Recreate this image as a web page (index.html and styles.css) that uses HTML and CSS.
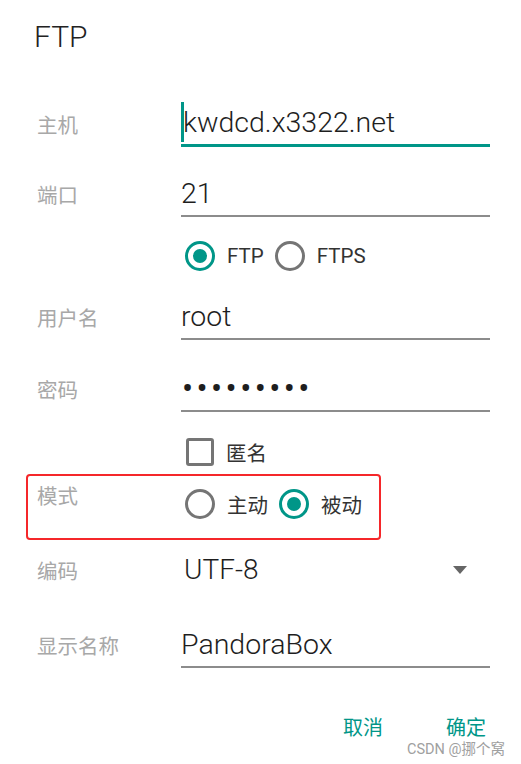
FILE: index.html
```html
<!DOCTYPE html>
<html lang="zh-CN">
<head>
<meta charset="utf-8">
<title>FTP</title>
<link rel="stylesheet" href="styles.css">
</head>
<body>
<div class="dialog">
  <div class="title">FTP</div>

  <div class="row row-host">
    <div class="label">主机</div>
    <div class="field field-focus"><span class="cursor"></span>kwdcd.x3322.net</div>
  </div>

  <div class="row row-port">
    <div class="label">端口</div>
    <div class="field">21</div>
  </div>

  <div class="row row-proto">
    <div class="label"></div>
    <div class="choices">
      <span class="radio on"></span><span class="choice-text">FTP</span>
      <span class="radio"></span><span class="choice-text">FTPS</span>
    </div>
  </div>

  <div class="row row-user">
    <div class="label">用户名</div>
    <div class="field">root</div>
  </div>

  <div class="row row-pass">
    <div class="label">密码</div>
    <div class="field pass">•••••••••</div>
  </div>

  <div class="row row-anon">
    <div class="label"></div>
    <div class="choices">
      <span class="checkbox"></span><span class="choice-text cjk">匿名</span>
    </div>
  </div>

  <div class="row row-mode">
    <div class="label label-top">模式</div>
    <div class="choices choices-mode">
      <span class="radio"></span><span class="choice-text cjk">主动</span>
      <span class="radio on"></span><span class="choice-text cjk">被动</span>
    </div>
  </div>

  <div class="row row-enc">
    <div class="label">编码</div>
    <div class="field spinner"><span class="spinner-text">UTF-8</span><span class="arrow"></span></div>
  </div>

  <div class="row row-name">
    <div class="label">显示名称</div>
    <div class="field">PandoraBox</div>
  </div>

  <div class="buttons">
    <span class="btn">取消</span>
    <span class="btn">确定</span>
  </div>

  <div class="watermark">CSDN @挪个窝</div>
</div>
</body>
</html>
```

FILE: styles.css
```css
* { box-sizing: border-box; }
html, body { margin: 0; padding: 0; background: #ffffff; }
body {
  font-family: Roboto, "Noto Sans CJK SC", sans-serif;
  color: #212121;
}
.dialog {
  position: relative;
  width: 521px;
  height: 764px;
  overflow: hidden;
}
.title {
  height: 75px;
  padding: 19px 0 0 34px;
  font-size: 30px;
  line-height: 36px;
  font-weight: 300;
  color: #222;
}
.row {
  display: flex;
  align-items: flex-end;
  padding: 0 31px 0 37px;
}
.label {
  flex: 0 0 144px;
  font-family: "Noto Sans CJK SC", sans-serif;
  font-size: 20.5px;
  line-height: 42px;
  padding-bottom: 2px;
  color: #a8a8a8;
}
.field {
  flex: 1;
  font-size: 28.5px;
  font-weight: 300;
  line-height: 42px;
  height: 44px;
  border-bottom: 2px solid #8c8c8c;
  white-space: nowrap;
  color: #1e1e1e;
}
.field-focus {
  height: 45px;
  border-bottom: 3px solid #009688;
}
.cursor {
  display: inline-block;
  width: 3px;
  height: 40px;
  background: #009688;
  vertical-align: top;
  margin: 0 -1px 0 0;
}
.row-host { margin-top: 27px; }
.row-port { margin-top: 26px; }
.row-proto { margin-top: 24px; align-items: center; }
.row-user { margin-top: 25px; }
.row-pass { margin-top: 28px; }
.row-anon { margin-top: 25px; align-items: center; }
.row-mode { margin-top: 16px; align-items: flex-start; position: relative; }
.row-enc { margin-top: 30px; }
.row-name { margin-top: 31px; }

.choices {
  display: flex;
  align-items: center;
  margin-left: 4px;
  height: 30px;
}
.choices-mode { margin-top: 6px; }
.label-top {
  line-height: 24px;
  padding-bottom: 0;
}
.choice-text {
  font-size: 20.5px;
  line-height: 30px;
  color: #333;
  margin: 0 11px 0 12px;
}
.cjk { font-family: "Noto Sans CJK SC", sans-serif; }
.radio {
  width: 30px;
  height: 30px;
  border: 3px solid #757575;
  border-radius: 50%;
  display: flex;
  align-items: center;
  justify-content: center;
  flex: none;
}
.radio.on { border-color: #009688; }
.radio.on::after {
  content: "";
  width: 14px;
  height: 14px;
  border-radius: 50%;
  background: #009688;
}
.checkbox {
  width: 28px;
  height: 28px;
  border: 3px solid #757575;
  border-radius: 3px;
  margin-left: 1px;
  flex: none;
}
.row-mode::after {
  content: "";
  position: absolute;
  left: 26px;
  top: -9px;
  width: 351px;
  height: 62px;
  border: 2px solid #f5272a;
  border-radius: 4px;
}
.pass {
  font-size: 33px;
  font-weight: 400;
  letter-spacing: 3.4px;
  padding-left: 1px;
}
.spinner {
  border-bottom-color: transparent;
  display: flex;
  align-items: center;
  justify-content: space-between;
}
.spinner-text {
  margin-left: 3px;
  font-size: 28px;
}
.arrow {
  width: 0;
  height: 0;
  border-left: 7.5px solid transparent;
  border-right: 7.5px solid transparent;
  border-top: 8px solid #666;
  margin-right: 23px;
}
.buttons {
  display: flex;
  justify-content: flex-end;
  gap: 63px;
  margin-top: 48px;
  padding-right: 35px;
}
.btn {
  font-family: Roboto, "Noto Sans CJK SC", sans-serif;
  font-size: 20px;
  line-height: 24px;
  font-weight: 400;
  color: #009688;
}
.watermark {
  position: absolute;
  right: 16px;
  top: 742px;
  font-family: Roboto, "Noto Sans CJK SC", sans-serif;
  font-size: 14.5px;
  line-height: 16px;
  color: #a0a0a0;
  white-space: nowrap;
}
```
